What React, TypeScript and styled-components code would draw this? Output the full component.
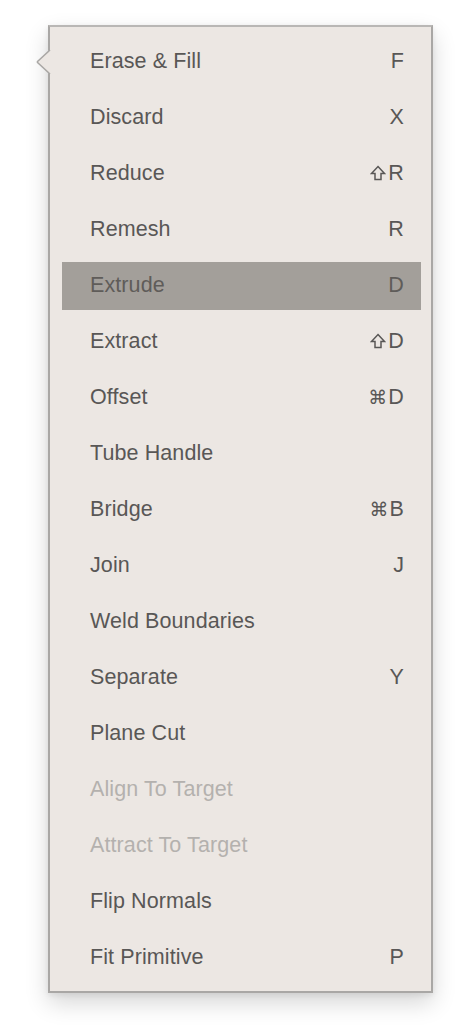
import React from "react";
import styled, { createGlobalStyle } from "styled-components";

const Global = createGlobalStyle`
  html, body { margin: 0; padding: 0; background: #ffffff; }
  body { font-family: "Liberation Sans", Arial, Helvetica, sans-serif; }
`;

const Page = styled.div`
  width: 468px;
  height: 1036px;
  padding: 25px 0 0 48px;
  box-sizing: border-box;
`;

const Menu = styled.div`
  position: relative;
  width: 385px;
  height: 968px;
  box-sizing: border-box;
  background: #ece7e3;
  border: 2px solid #a9a7a5;
  border-top-color: #b9b7b5;
  box-shadow: 0 10px 22px rgba(0, 0, 0, 0.16), 0 2px 6px rgba(0, 0, 0, 0.08);
  padding: 11px 10px 8px 12px;
  display: flex;
  flex-direction: column;
  gap: 8px;
`;

const Pointer = styled.svg`
  position: absolute;
  left: -14px;
  top: 23px;
  width: 16px;
  height: 24px;
  overflow: visible;
`;

const Row = styled.div<{ $active?: boolean; $disabled?: boolean }>`
  height: 48px;
  flex: 0 0 48px;
  box-sizing: border-box;
  display: flex;
  align-items: center;
  justify-content: space-between;
  padding: 0 17px 2px 28px;
  background: ${(p) => (p.$active ? "#a39f9a" : "transparent")};
  color: ${(p) => (p.$disabled ? "#b4b1ae" : p.$active ? "#5f5c59" : "#595756")};
  font-size: 21.5px;
  letter-spacing: 0.1px;
`;

const Label = styled.span``;

const Shortcut = styled.span`
  display: flex;
  align-items: center;
  gap: 1px;
`;

const Glyph = styled.span`
  font-family: "DejaVu Sans", sans-serif;
  font-size: 19px;
`;

const ShiftIcon = styled.svg`
  width: 16px;
  height: 16px;
  margin-right: 1px;
`;

type Item = { label: string; mod?: "shift" | "cmd"; key?: string; active?: boolean; disabled?: boolean };

const items: Item[] = [
  { label: "Erase & Fill", key: "F" },
  { label: "Discard", key: "X" },
  { label: "Reduce", mod: "shift", key: "R" },
  { label: "Remesh", key: "R" },
  { label: "Extrude", key: "D", active: true },
  { label: "Extract", mod: "shift", key: "D" },
  { label: "Offset", mod: "cmd", key: "D" },
  { label: "Tube Handle" },
  { label: "Bridge", mod: "cmd", key: "B" },
  { label: "Join", key: "J" },
  { label: "Weld Boundaries" },
  { label: "Separate", key: "Y" },
  { label: "Plane Cut" },
  { label: "Align To Target", disabled: true },
  { label: "Attract To Target", disabled: true },
  { label: "Flip Normals" },
  { label: "Fit Primitive", key: "P" },
];

function Modifier({ kind }: { kind: "shift" | "cmd" }) {
  if (kind === "shift") {
    return (
      <ShiftIcon viewBox="0 0 16 16">
        <path
          d="M8 1.5 L14.5 8.5 L11 8.5 L11 14.5 L5 14.5 L5 8.5 L1.5 8.5 Z"
          fill="none"
          stroke="currentColor"
          strokeWidth="1.5"
          strokeLinejoin="miter"
        />
      </ShiftIcon>
    );
  }
  return <Glyph>⌘</Glyph>;
}

export default function App() {
  return (
    <>
      <Global />
      <Page>
        <Menu>
          <Pointer viewBox="0 0 16 24">
            <path d="M16 0 L13.5 0 L1.5 11.5 L1.5 12.5 L13.5 24 L16 24 Z" fill="#ece7e3" />
            <path d="M14 0 L1.5 11.5 L1.5 12.5 L14 24" fill="none" stroke="#a9a7a5" strokeWidth="1.6" />
          </Pointer>
          {items.map((it) => (
            <Row key={it.label} $active={it.active} $disabled={it.disabled}>
              <Label>{it.label}</Label>
              {it.key && (
                <Shortcut>
                  {it.mod && <Modifier kind={it.mod} />}
                  <span>{it.key}</span>
                </Shortcut>
              )}
            </Row>
          ))}
        </Menu>
      </Page>
    </>
  );
}
